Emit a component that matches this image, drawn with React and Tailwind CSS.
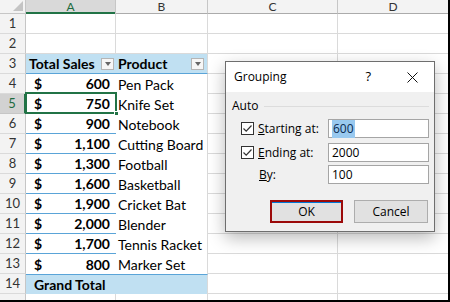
import React from "react";

const data = [
  ["600", "Pen Pack"],
  ["750", "Knife Set"],
  ["900", "Notebook"],
  ["1,100", "Cutting Board"],
  ["1,300", "Football"],
  ["1,600", "Basketball"],
  ["1,900", "Cricket Bat"],
  ["2,000", "Blender"],
  ["1,700", "Tennis Racket"],
  ["800", "Marker Set"],
];

const xl = { fontFamily: "Lato, 'Open Sans', sans-serif" };
const ui = { fontFamily: "'Open Sans', 'Noto Sans', sans-serif" };

function RowHead({ n, sel }) {
  return (
    <div
      className={
        "w-[26px] shrink-0 flex items-center justify-center text-[13px] border-b " +
        (sel
          ? "bg-[#d2d2d2] text-[#1e6b40] border-r-2 border-r-[#217346] border-b-[#c6c6c6]"
          : "bg-[#f3f3f3] text-[#333] border-r border-r-[#c6c6c6] border-b-[#dadada]")
      }
    >
      {n}
    </div>
  );
}

function DropBtn() {
  return (
    <div className="w-[13px] h-[12px] bg-[#f6f6f6] border border-[#b5b5b5] flex items-center justify-center">
      <div className="w-0 h-0 border-l-[3px] border-r-[3px] border-t-[4px] border-l-transparent border-r-transparent border-t-[#666]"></div>
    </div>
  );
}

function Check() {
  return (
    <div className="w-[13px] h-[13px] bg-white border border-[#333] flex items-center justify-center">
      <svg width="11" height="11" viewBox="0 0 11 11">
        <path d="M1.5 5.5 L4.2 8.2 L9.5 2.5" fill="none" stroke="#333" strokeWidth="1.2" />
      </svg>
    </div>
  );
}

function Field({ children }) {
  return (
    <div className="w-[101px] h-[19px] bg-white border border-[#a5a5a5] flex items-center pl-[3px] text-[12px] text-black">
      {children}
    </div>
  );
}

export default function App() {
  return (
    <div
      className="relative w-[450px] h-[302px] overflow-hidden bg-white border-r-2 border-b-2 border-black"
      style={xl}
    >
      {/* column headers */}
      <div className="flex h-[14px] text-[12px] leading-[12px]">
        <div className="relative w-[26px] shrink-0 bg-[#f3f3f3] border-r border-b border-[#c6c6c6]">
          <div className="absolute right-[2px] bottom-[2px] w-0 h-0 border-l-[10px] border-l-transparent border-b-[10px] border-b-[#c4c4c4]"></div>
        </div>
        <div className="w-[90px] shrink-0 bg-[#d9d9d9] border-r border-[#c6c6c6] shadow-[inset_0_-2px_0_#217346] text-[#1e6b40] flex items-start pt-[1px] justify-center">
          A
        </div>
        <div className="w-[92px] shrink-0 bg-[#f3f3f3] border-r border-b border-[#c6c6c6] border-b-[#ababab] text-[#333] flex items-center justify-center">
          B
        </div>
        <div className="w-[130px] shrink-0 bg-[#f3f3f3] border-r border-b border-[#c6c6c6] border-b-[#ababab] text-[#333] flex items-center justify-center">
          C
        </div>
        <div className="flex-1 bg-[#f3f3f3] border-b border-[#ababab] text-[#333] flex items-center justify-center">
          D
        </div>
      </div>

      {/* rows 1-2 */}
      {[1, 2].map((n) => (
        <div key={n} className="flex h-[20px]">
          <RowHead n={n} />
          <div className="w-[90px] shrink-0 border-r border-b border-[#dadada]"></div>
          <div className="w-[92px] shrink-0 border-r border-b border-[#dadada]"></div>
          <div className="w-[130px] shrink-0 border-r border-b border-[#dadada]"></div>
          <div className="flex-1 border-b border-[#dadada]"></div>
        </div>
      ))}

      {/* row 3: pivot header */}
      <div className="flex h-[20px] text-[14px] text-black">
        <RowHead n={3} />
        <div className="w-[90px] shrink-0 bg-[#c0e0f2] border-b border-[#5aa4d8] flex items-center pl-[3px] pr-[2px] font-bold">
          <span className="flex-1">Total Sales</span>
          <DropBtn />
        </div>
        <div className="w-[92px] shrink-0 bg-[#c0e0f2] border-b border-[#5aa4d8] border-r border-r-[#dadada] flex items-center pl-[2px] pr-[3px] font-bold">
          <span className="flex-1">Product</span>
          <DropBtn />
        </div>
        <div className="w-[130px] shrink-0 border-r border-b border-[#dadada]"></div>
        <div className="flex-1 border-b border-[#dadada]"></div>
      </div>

      {/* data rows */}
      {data.map(([v, p], i) => {
        const n = i + 4;
        const sel = n === 5;
        return (
          <div key={n} className="flex h-[20px] text-[14px] text-black">
            <RowHead n={n} sel={sel} />
            <div
              className={
                "relative w-[90px] shrink-0 flex items-center pl-[8px] pr-[6px] font-bold " +
                (n === 13 ? "" : "border-b border-[#5aa4d8]")
              }
            >
              <span className="flex-1">$</span>
              <span>{v}</span>
              {sel && (
                <div className="absolute left-[-1px] top-[-2px] right-[-1px] bottom-[-1px] border-2 border-[#217346]">
                  <div className="absolute right-[-4px] bottom-[-4px] w-[5px] h-[5px] bg-[#217346] border border-white"></div>
                </div>
              )}
            </div>
            <div className="w-[92px] shrink-0 flex items-center pl-[2px] border-r border-[#dadada] whitespace-nowrap">
              {p}
            </div>
            <div className="w-[130px] shrink-0 border-r border-b border-[#dadada]"></div>
            <div className="flex-1 border-b border-[#dadada]"></div>
          </div>
        );
      })}

      {/* row 14 grand total */}
      <div className="flex h-[20px] text-[14px] text-black">
        <RowHead n={14} />
        <div className="w-[182px] shrink-0 bg-[#c0e0f2] border-t border-[#5aa4d8] border-r border-r-[#dadada] flex items-center pl-[8px] font-bold">
          Grand Total
        </div>
        <div className="w-[130px] shrink-0 border-r border-b border-[#dadada]"></div>
        <div className="flex-1 border-b border-[#dadada]"></div>
      </div>

      {/* row 15 partial */}
      <div className="flex h-[20px]">
        <div className="w-[26px] shrink-0 bg-[#f3f3f3] border-r border-[#c6c6c6]"></div>
        <div className="w-[90px] shrink-0 border-r border-[#dadada]"></div>
        <div className="w-[92px] shrink-0 border-r border-[#dadada]"></div>
        <div className="w-[130px] shrink-0 border-r border-[#dadada]"></div>
        <div className="flex-1"></div>
      </div>

      {/* Grouping dialog */}
      <div
        className="absolute left-[225px] top-[61px] w-[210px] h-[171px] border border-[#6e6e6e] bg-[#f0f0f0] shadow-[0_6px_16px_rgba(0,0,0,0.28)] flex flex-col"
        style={ui}
      >
        <div className="h-[30px] bg-white flex items-center pl-[8px] text-[12px] text-black">
          <span className="flex-1">Grouping</span>
          <span className="text-[13px] mr-[36px]">?</span>
          <svg width="11" height="11" viewBox="0 0 11 11" className="mr-[16px]">
            <path d="M0.5 0.5 L10.5 10.5 M10.5 0.5 L0.5 10.5" stroke="#111" strokeWidth="1" />
          </svg>
        </div>
        <div className="flex-1 flex flex-col text-[12px] text-black">
          <div className="flex items-center h-[14px] mt-[7px] pl-[6px] pr-[5px]">
            <span className="mr-[6px]">Auto</span>
            <div className="flex-1 h-px bg-[#dcdcdc]"></div>
          </div>
          <div className="flex items-center h-[19px] mt-[6px] pl-[15px]">
            <Check />
            <span className="ml-[4px] flex-1">
              <u>S</u>tarting at:
            </span>
            <div className="mr-[5px]">
              <Field>
                <span className="bg-[#99c9ef] text-[#0a2a50] px-[1px]">600</span>
              </Field>
            </div>
          </div>
          <div className="flex items-center h-[19px] mt-[5px] pl-[15px]">
            <Check />
            <span className="ml-[4px] flex-1">
              <u>E</u>nding at:
            </span>
            <div className="mr-[5px]">
              <Field>2000</Field>
            </div>
          </div>
          <div className="flex items-center h-[19px] mt-[3px] pl-[33px]">
            <span className="flex-1">
              <u>B</u>y:
            </span>
            <div className="mr-[5px]">
              <Field>100</Field>
            </div>
          </div>
          <div className="flex mt-[16px] pl-[44px] gap-[11px]">
            <div className="w-[73px] h-[23px] border-2 border-[#9c0a0a] bg-[#e1e1e1] flex items-center justify-center">
              <div className="w-full h-full border border-[#0078d7] border-l-0 border-r-0 border-b-0 flex items-center justify-center">
                OK
              </div>
            </div>
            <div className="w-[74px] h-[23px] border border-[#adadad] bg-[#e1e1e1] flex items-center justify-center">
              Cancel
            </div>
          </div>
        </div>
      </div>
    </div>
  );
}
